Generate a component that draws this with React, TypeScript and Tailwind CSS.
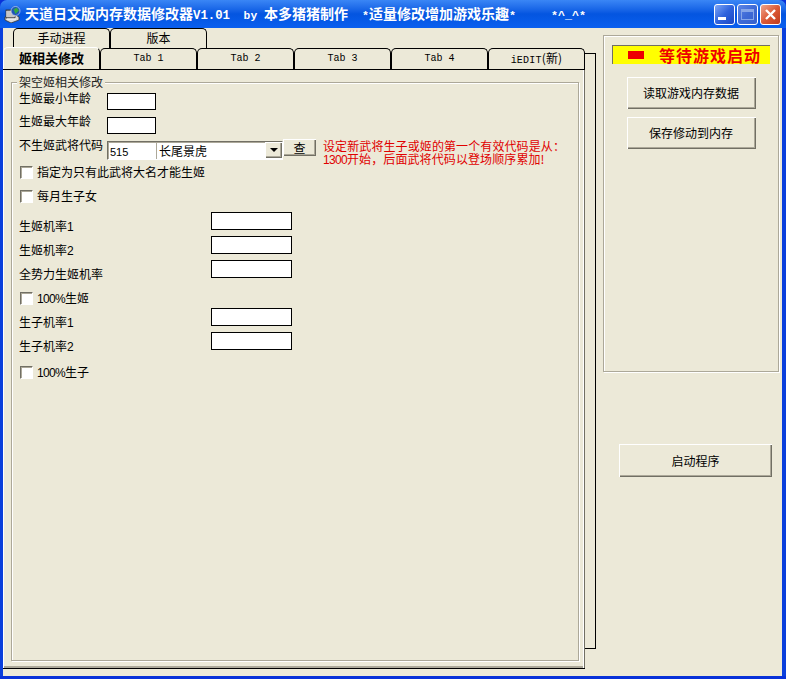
import type { ReactNode } from 'react';

const cjk = "font-['Noto_Sans_CJK_SC',sans-serif]";
const raised =
  'shadow-[inset_1px_1px_0_#fff,inset_-1px_-1px_0_#716f64,inset_-2px_-2px_0_#aca899]';
const fieldBox = 'border border-black bg-white';

function M({ children, size = 'text-[10px]' }: { children: ReactNode; size?: string }) {
  return <span className={`font-['Liberation_Mono',monospace] ${size}`}>{children}</span>;
}

// digits that sit beside 12px labels
function D({ children }: { children: ReactNode }) {
  return <span className="font-['Liberation_Sans',sans-serif] text-[12px] tracking-[-0.67px]">{children}</span>;
}

function AppIcon() {
  return (
    <svg width="18" height="17" viewBox="0 0 18 17" className="shrink-0">
      <path d="M1 11l9-3 5 3v3l-8 3-6-3z" fill="#d9d9d9" stroke="#333" strokeWidth="0.8" />
      <rect x="2" y="4" width="9" height="8" fill="#8c8c8c" stroke="#333" strokeWidth="0.8" />
      <path d="M2 6h9M2 8h9M2 10h9M3 13h9" stroke="#fff" />
      <circle cx="11.5" cy="5" r="4.5" fill="#1f55b8" stroke="#dfe8f5" strokeWidth="0.6" />
      <path d="M9.5 3.5l3-2 2.5 3-3.5 3.5z" fill="#35a845" />
    </svg>
  );
}

function WindowButtons() {
  const base = 'flex h-[21px] w-[21px] items-center justify-center rounded-[3px] border border-white';
  return (
    <div className="flex gap-[2px]">
      <div className={`${base} bg-gradient-to-br from-[#7fa5f5] via-[#2f63dd] to-[#1c46c4]`}>
        <div className="mt-[9px] mr-[5px] h-[3px] w-[8px] bg-white" />
      </div>
      <div className={`${base} border-[#86a6e8] bg-gradient-to-br from-[#5d86e6] via-[#3e6ad6] to-[#3560cc]`}>
        <div className="h-[11px] w-[13px] border border-t-[3px] border-[#86a6e8]" />
      </div>
      <div className={`${base} bg-gradient-to-br from-[#eda48c] via-[#dc5a36] to-[#bf3a1c]`}>
        <svg width="13" height="13" viewBox="0 0 13 13">
          <path d="M2 2l9 9M11 2l-9 9" stroke="#fff" strokeWidth="2.4" />
        </svg>
      </div>
    </div>
  );
}

function TitleBar() {
  return (
    <div className="flex h-[28px] shrink-0 items-center rounded-t-[7px] bg-gradient-to-b from-[#3a86f5] via-[#0455e0] to-[#0a5fef] pr-[5px] pl-[4px]">
      <AppIcon />
      <div className={`ml-[3px] flex-1 text-[14px] leading-[18px] font-bold whitespace-pre text-white ${cjk}`}>
        天道日文版内存数据修改器
        <M size="text-[12.33px]">V1.01</M>
        <M size="text-[11.33px]">  by </M>
        本多猪猪制作
        <M size="text-[11.67px]">  *</M>
        适量修改增加游戏乐趣
        <M size="text-[11.67px]">*     *^_^*</M>
      </div>
      <WindowButtons />
    </div>
  );
}

function Tab({ children, active = false, tall = false }: { children: ReactNode; active?: boolean; tall?: boolean }) {
  const height = tall ? 'h-[20px] pb-[1px]' : active ? 'h-[22px] -mt-[1px] -mb-[1px] z-20 pb-[2px]' : 'h-[21px]';
  return (
    <div
      className={`relative flex w-[97px] items-center justify-center rounded-t-[5px] border-x border-t border-black bg-[#ece9d8] text-[12px] leading-none text-black ${height} ${
        active ? 'border-t-white border-l-white font-bold text-[13px]' : ''
      }`}
    >
      {children}
    </div>
  );
}

function Check({ children, className = '' }: { children: ReactNode; className?: string }) {
  return (
    <div className={`flex h-[24px] items-center gap-[4px] pl-[1px] ${className}`}>
      <div className="h-[13px] w-[13px] border border-t-[#716f64] border-r-white border-b-white border-l-[#716f64] bg-white shadow-[inset_1px_1px_0_#aca899]" />
      <span>{children}</span>
    </div>
  );
}

function AgeRow({ label, lift = '' }: { label: string; lift?: string }) {
  return (
    <div className="flex h-[24px] items-center">
      <span className={`w-[88px] shrink-0 ${lift}`}>{label}</span>
      <div className={`${fieldBox} mt-[6px] h-[17px] w-[49px]`} />
    </div>
  );
}

function RateRow({ label }: { label: ReactNode }) {
  return (
    <div className="flex h-[24px] items-center">
      <span className="w-[192px] shrink-0">{label}</span>
      <div className={`${fieldBox} mb-[10px] h-[18px] w-[81px]`} />
    </div>
  );
}

function GroupBox() {
  return (
    <div className="relative mt-[12px] ml-[8px] flex h-[579px] w-[568px] flex-col border border-[#aca899] pt-[3px] pl-[7px] shadow-[1px_1px_0_#fff,inset_1px_1px_0_#fff]">
      <span className="absolute -top-[8px] left-[5px] bg-[#ece9d8] px-[2px] leading-[14px] text-[#222]">
        架空姬相关修改
      </span>
      <AgeRow label="生姬最小年龄" />
      <AgeRow label="生姬最大年龄" lift="-mt-[2px]" />
      <div className="flex h-[24px] items-center">
        <span className="-mt-[2px] w-[88px] shrink-0">不生姬武将代码</span>
        <div className="mt-[8px] flex h-[19px] w-[176px] border border-t-[#716f64] border-r-white border-b-white border-l-[#716f64] bg-white shadow-[inset_1px_1px_0_#aca899]">
          <span className="w-[48px] pl-[2px] leading-[18px]">
            <span className="font-['Liberation_Sans',sans-serif] text-[11px]">515</span>
          </span>
          <div className="flex flex-1 items-center border-l border-[#aca899] pl-[2px]">
            <span className="flex-1 leading-[17px]">长尾景虎</span>
            <div className={`flex h-[16px] w-[17px] items-center justify-center bg-[#ece9d8] ${raised}`}>
              <div className="h-0 w-0 border-x-[4px] border-t-[4px] border-x-transparent border-t-black" />
            </div>
          </div>
        </div>
        <div className={`mt-[3px] flex h-[17px] w-[33px] items-center justify-center bg-[#ece9d8] ${raised}`}>
          查
        </div>
        <p className="mt-[13px] ml-[7px] w-[250px] leading-[13px] tracking-[0.1px] whitespace-nowrap text-[#e00000]">
          设定新武将生子或姬的第一个有效代码是从：
          <br />
          <D>1300</D>开始，后面武将代码以登场顺序累加!
        </p>
      </div>
      <Check className="mt-[2px]">指定为只有此武将大名才能生姬</Check>
      <Check>每月生子女</Check>
      <div className="mt-[6px]">
        <RateRow label={<>生姬机率<D>1</D></>} />
        <RateRow label={<>生姬机率<D>2</D></>} />
        <RateRow label="全势力生姬机率" />
      </div>
      <Check>
        <D>100%</D>生姬
      </Check>
      <RateRow label={<>生子机率<D>1</D></>} />
      <RateRow label={<>生子机率<D>2</D></>} />
      <Check className="mt-[2px]">
        <D>100%</D>生子
      </Check>
    </div>
  );
}

function TabsArea() {
  return (
    <div className="relative h-[641px] w-[593px] shrink-0">
      {/* edge of the page behind the front tab control */}
      <div className="absolute top-[25px] left-[570px] h-[596px] w-[23px] border-y border-r border-black" />
      <div className="relative flex pl-[10px]">
        <Tab tall>手动进程</Tab>
        <Tab tall>版本</Tab>
      </div>
      <div className="relative flex">
        <Tab active>姬相关修改</Tab>
        <Tab><M>Tab 1</M></Tab>
        <Tab><M>Tab 2</M></Tab>
        <Tab><M>Tab 3</M></Tab>
        <Tab><M>Tab 4</M></Tab>
        <Tab>
          <span className="tracking-[0.2px]">
            <M>iEDIT</M>(新)
          </span>
        </Tab>
      </div>
      <div className="relative z-10 h-[600px] w-[582px] border-t border-b border-t-black border-b-black bg-[#ece9d8] shadow-[inset_1px_0_0_#fff,inset_-1px_0_0_#fff,inset_-2px_0_0_#fff,inset_0_-2px_0_#aca899]">
        <div className="absolute top-0 right-0 h-full w-[1px] bg-[#716f64]" />
        <GroupBox />
      </div>
    </div>
  );
}

function Button({ children, className }: { children: ReactNode; className: string }) {
  return (
    <div className={`flex items-center justify-center bg-[#ece9d8] ${raised} ${className}`}>{children}</div>
  );
}

function SidePanel() {
  return (
    <div className="ml-[7px] flex w-[176px] flex-col">
      <div className="mt-[7px] flex h-[337px] flex-col items-center border border-[#aca899] shadow-[inset_1px_1px_0_#fff,1px_1px_0_#fff]">
        <div className="mt-[9px] flex h-[19px] w-[158px] items-center border-t border-l border-t-[#716f64] border-l-[#716f64] bg-[#ffff00]">
          <div className="ml-[15px] h-[8px] w-[16px] bg-[#ee0000]" />
          <span className="ml-[15px] text-[16px] leading-[17px] font-bold tracking-[1px] whitespace-nowrap text-[#ee0000]">
            等待游戏启动
          </span>
        </div>
        <Button className="mt-[13px] h-[32px] w-[129px]">读取游戏内存数据</Button>
        <Button className="mt-[8px] h-[32px] w-[129px]">保存修动到内存</Button>
      </div>
      <Button className="mt-[72px] ml-[16px] h-[33px] w-[153px]">启动程序</Button>
    </div>
  );
}

export default function App() {
  return (
    <div className={`flex h-[679px] w-[786px] flex-col overflow-hidden bg-[#0831d9] text-[12px] text-black ${cjk}`}>
      <TitleBar />
      <div className="flex h-[648px] border-r-[4px] border-l-[3px] border-[#0a3fdc] bg-[#ece9d8]">
        <TabsArea />
        <SidePanel />
      </div>
    </div>
  );
}
